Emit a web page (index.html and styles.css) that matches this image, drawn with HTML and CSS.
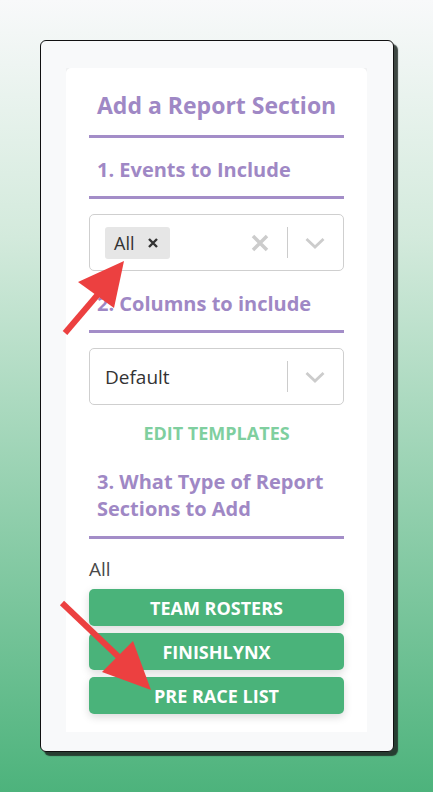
FILE: index.html
```html
<!DOCTYPE html>
<html lang="en">
<head>
    <meta charset="UTF-8">
    <meta name="viewport" content="width=device-width, initial-scale=1.0">
    <title>Add a Report Section</title>
    <link rel="stylesheet" href="styles.css">
</head>
<body>
    <div class="frame">
        <div class="viewport">
            <div class="card">
                <h1 class="card-title">Add a Report Section</h1>
                <div class="divider"></div>

                <h2 class="step-title step-events">1. Events to Include</h2>
                <div class="divider"></div>
                <div class="select select-events">
                    <div class="select-value">
                        <span class="chip">All
                            <svg class="chip-remove" width="10" height="10" viewBox="0 0 10 10">
                                <path d="M1 1 L9 9 M9 1 L1 9" stroke="#333" stroke-width="2.4" fill="none"/>
                            </svg>
                        </span>
                    </div>
                    <div class="select-indicators">
                        <svg class="clear-icon" width="20" height="20" viewBox="0 0 20 20">
                            <path d="M3 3 L17 17 M17 3 L3 17" stroke="#cccccc" stroke-width="3.5" fill="none"/>
                        </svg>
                        <span class="separator"></span>
                        <svg class="chevron" width="20" height="20" viewBox="0 0 20 20">
                            <path d="M1.5 6 L10 14 L18.5 6" stroke="#cccccc" stroke-width="2.8" fill="none"/>
                        </svg>
                    </div>
                </div>

                <h2 class="step-title step-columns">2. Columns to include</h2>
                <div class="divider"></div>
                <div class="select select-columns">
                    <div class="select-value">
                        <span class="select-text">Default</span>
                    </div>
                    <div class="select-indicators">
                        <span class="separator"></span>
                        <svg class="chevron" width="20" height="20" viewBox="0 0 20 20">
                            <path d="M1.5 6 L10 14 L18.5 6" stroke="#cccccc" stroke-width="2.8" fill="none"/>
                        </svg>
                    </div>
                </div>
                <a class="link-button" href="#">EDIT TEMPLATES</a>

                <h2 class="step-title step-types">3. What Type of Report Sections to Add</h2>
                <div class="divider"></div>
                <div class="group-label">All</div>
                <div class="type-list">
                    <button class="type-button">TEAM ROSTERS</button>
                    <button class="type-button">FINISHLYNX</button>
                    <button class="type-button">PRE RACE LIST</button>
                </div>
            </div>
        </div>
    </div>

    <!-- callout arrows drawn over the screenshot -->
    <svg class="callouts" width="433" height="792" viewBox="0 0 433 792">
        <g fill="#ec4040" stroke="#ec4040">
            <line x1="65" y1="333" x2="100" y2="292" stroke-width="6"/>
            <polygon points="124,261 78,282 114,308" stroke="none"/>
            <line x1="62" y1="603" x2="124" y2="662" stroke-width="6"/>
            <polygon points="151,690 133,641 102,672" stroke="none"/>
        </g>
    </svg>
</body>
</html>
```

FILE: styles.css
```css
body {
    margin: 0;
    padding: 40px 0 0 40px;
    width: 433px;
    height: 792px;
    box-sizing: border-box;
    font-family: "Open Sans", Arial, sans-serif;
    background: linear-gradient(to bottom, #f8f9fa 0%, #d3eadc 30%, #4db37c 100%);
    position: relative;
    overflow: hidden;
}
.frame {
    width: 354px;
    height: 712px;
    box-sizing: border-box;
    background-color: #f8f9fa;
    border: 1px solid #111;
    border-radius: 6px;
    box-shadow: 4px 4px 1px rgba(30, 40, 35, 0.85);
    padding: 27px 26px 20px 25px;
}
.viewport {
    height: 664px;
    overflow: hidden;
}
.card {
    background-color: #fff;
    border-radius: 5px;
    box-shadow: 0 0 6px rgba(0, 0, 0, 0.12);
    padding: 22px 23px 40px 23px;
}
.card-title {
    margin: 0;
    padding: 0 8px;
    font-size: 23px;
    line-height: 30px;
    font-weight: 700;
    color: #9f88c5;
    white-space: nowrap;
}
.divider {
    height: 3px;
    background-color: #a38dc8;
    margin-top: 15px;
}
.step-title {
    margin: 0;
    padding: 0 8px;
    font-size: 20px;
    line-height: 27px;
    font-weight: 700;
    color: #9f88c5;
}
.step-events {
    margin-top: 18px;
}
.step-events + .divider,
.step-columns + .divider {
    margin-top: 13px;
}
.step-columns {
    margin-top: 19px;
}
.step-types {
    margin-top: 25px;
}
.select {
    display: flex;
    align-items: center;
    height: 57px;
    box-sizing: border-box;
    margin-top: 15px;
    border: 1px solid #cfcfcf;
    border-radius: 5px;
    background-color: #fff;
}
.select-value {
    flex-grow: 1;
    padding-left: 15px;
    display: flex;
    align-items: center;
}
.chip {
    display: inline-flex;
    align-items: center;
    height: 32px;
    padding: 0 12px 0 9px;
    background-color: #e6e6e6;
    border-radius: 3px;
    font-size: 18px;
    color: #333;
}
.chip-remove {
    margin-left: 14px;
}
.select-text {
    font-size: 19px;
    color: #333;
}
.select-indicators {
    display: flex;
    align-items: center;
    height: 100%;
}
.clear-icon {
    margin-right: 17px;
}
.separator {
    width: 1px;
    height: 31px;
    background-color: #cccccc;
}
.chevron {
    margin: 0 18px 0 17px;
}
.link-button {
    display: block;
    margin-top: 18px;
    text-align: center;
    font-size: 18px;
    line-height: 20px;
    font-weight: 700;
    color: #7fcf9f;
    text-decoration: none;
}
.step-types + .divider {
    margin-top: 14px;
}
.group-label {
    margin-top: 18px;
    font-size: 19px;
    line-height: 24px;
    color: #4a4a4a;
}
.type-list {
    display: flex;
    flex-direction: column;
    gap: 7px;
    margin-top: 8px;
}
.type-button {
    height: 37px;
    border: none;
    border-radius: 5px;
    background-color: #4ab37a;
    color: #fff;
    font-family: "Open Sans", Arial, sans-serif;
    font-size: 18px;
    font-weight: 700;
    box-shadow: 0 3px 8px rgba(0, 0, 0, 0.15);
    cursor: pointer;
}
.callouts {
    position: absolute;
    left: 0;
    top: 0;
    pointer-events: none;
}
```
